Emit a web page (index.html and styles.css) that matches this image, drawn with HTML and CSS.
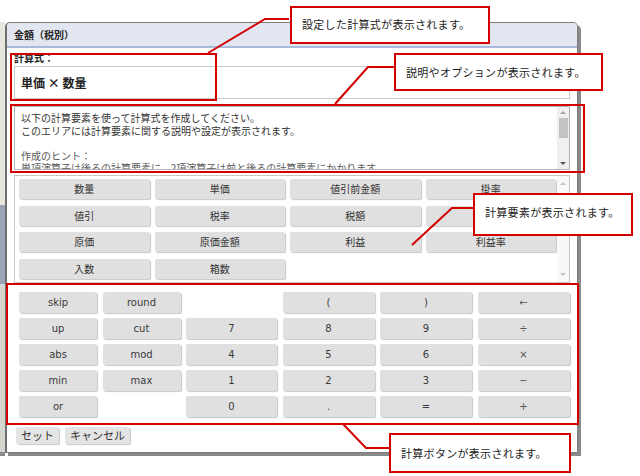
FILE: index.html
```html
<!DOCTYPE html>
<html lang="ja">
<head>
<meta charset="utf-8">
<title>金額（税別）</title>
<link rel="stylesheet" href="styles.css">
</head>
<body>
<div class="page">
  <div class="backdrop"></div>
  <div class="dialog">
    <div class="titlebar">金額（税別）</div>
    <div class="dbody">
      <div class="label">計算式：</div>
      <div class="formula">単価 × 数量</div>
      <div class="desc">
        <div class="desc-text">
          <p>以下の計算要素を使って計算式を作成してください。<br>このエリアには計算要素に関する説明や設定が表示されます。</p>
          <p class="hint">作成のヒント：<br>単項演算子は後ろの計算要素に、2項演算子は前と後ろの計算要素にかかります。</p>
        </div>
        <div class="vscroll">
          <span class="arr up"></span><span class="thumb"></span><span class="fill"></span><span class="arr down"></span>
        </div>
      </div>
      <div class="elems">
        <div class="egrid">
          <button>数量</button><button>単価</button><button>値引前金額</button><button>掛率</button>
          <button>値引</button><button>税率</button><button>税額</button><button>金額</button>
          <button>原価</button><button>原価金額</button><button>利益</button><button>利益率</button>
          <button>入数</button><button>箱数</button>
        </div>
        <div class="vscroll light">
          <span class="arr up"></span><span class="fill"></span><span class="arr down"></span>
        </div>
      </div>
      <div class="calc">
        <button>skip</button><button>round</button><span class="blank"></span><button>(</button><button>)</button><button class="sym">←</button>
        <button>up</button><button>cut</button><button>7</button><button>8</button><button>9</button><button class="sym">÷</button>
        <button>abs</button><button>mod</button><button>4</button><button>5</button><button>6</button><button class="sym">×</button>
        <button>min</button><button>max</button><button>1</button><button>2</button><button>3</button><button class="sym">−</button>
        <button>or</button><span class="blank"></span><button>0</button><button>.</button><button>=</button><button class="sym">+</button>
      </div>
      <div class="actions"><button>セット</button><button>キャンセル</button></div>
    </div>
  </div>
</div>

<div class="rbox rb-formula"></div>
<div class="rbox rb-desc"></div>
<div class="rbox rb-calc"></div>

<svg class="lines" width="640" height="476" viewBox="0 0 640 476">
  <polyline points="289,19 265,19 208,53"/>
  <polyline points="395,67 368,67 335,104"/>
  <polyline points="474,208 452,208 412,245"/>
  <polyline points="390,448 366,448 343,424"/>
</svg>

<div class="callout c1">設定した計算式が表示されます。</div>
<div class="callout c2">説明やオプションが表示されます。</div>
<div class="callout c3">計算要素が表示されます。</div>
<div class="callout c4">計算ボタンが表示されます。</div>
</body>
</html>
```

FILE: styles.css
```css
* { box-sizing: border-box; }
html, body { margin: 0; padding: 0; }
body {
  width: 640px;
  height: 476px;
  position: relative;
  overflow: hidden;
  background: #fff;
  font-family: "Noto Sans CJK JP", "DejaVu Sans", sans-serif;
  color: #333;
}

.page {
  display: flex;
  padding-top: 22px;
}

.backdrop {
  width: 5px;
  height: 434px;
  background: linear-gradient(to bottom, #e6e6de 0 183px, #9ba4b4 183px 262px, #d6d6d0 262px 430px, #8c8c8c 430px);
}

.dialog {
  width: 573px;
  height: 431px;
  border: 1px solid #7d7d7d;
  border-left: 2px solid #6e6e6e;
  border-radius: 5px 5px 0 0;
  box-shadow: 3px 3px 0 #8a8a8a;
  background: #fff;
  display: flex;
  flex-direction: column;
}

.titlebar {
  height: 25px;
  background: #e2e6f0;
  border-bottom: 2px solid #a9bbdb;
  border-radius: 4px 4px 0 0;
  padding-left: 7px;
  font-size: 10px;
  font-weight: bold;
  line-height: 23px;
  color: #222;
}

.dbody {
  padding: 0 7px;
}

.label {
  margin-top: 3px;
  font-size: 10px;
  font-weight: bold;
  line-height: 14px;
  color: #222;
}

.formula {
  margin-top: 1px;
  height: 33px;
  border: 1px solid #c8c8c8;
  padding-left: 6px;
  font-size: 12px;
  font-weight: bold;
  line-height: 31px;
  color: #222;
}

.desc {
  margin-top: 7px;
  height: 64px;
  border: 1px solid #b4b4b4;
  display: flex;
}

.desc-text {
  flex: 1;
  padding: 5px 0 0 6px;
  font-size: 10px;
  line-height: 12.5px;
  overflow: hidden;
  color: #333;
}
.desc-text p { margin: 0; }
.desc-text p + p { margin-top: 12.5px; }
.desc-text .hint { color: #5a5a5a; }

.vscroll {
  width: 12px;
  background: #f0f0f0;
  display: flex;
  flex-direction: column;
  align-items: center;
}
.vscroll .fill { flex: 1; }
.vscroll .arr {
  width: 0;
  height: 0;
  border-left: 3px solid transparent;
  border-right: 3px solid transparent;
}
.vscroll .up { border-bottom: 3px solid #a6a6a6; margin-top: 4px; }
.vscroll .down { border-top: 3px solid #555; margin-bottom: 4px; }
.vscroll .thumb {
  width: 9px;
  height: 20px;
  margin-top: 4px;
  background: #c3c3c3;
}
.vscroll.light { background: #f8f8f8; margin-left: auto; }
.vscroll.light .up { border-bottom-color: #c4c4c4; margin-top: 6px; }
.vscroll.light .down { border-top-color: #c4c4c4; margin-bottom: 6px; }

button {
  font-family: inherit;
  border: none;
  background: #e0e0e0;
  border-radius: 2px;
  box-shadow: 1px 1px 1px rgba(0, 0, 0, 0.22);
  color: #333;
  font-size: 10px;
  padding: 0;
  line-height: 1;
}

.elems {
  margin-top: 5px;
  height: 108px;
  border: 1px solid #c8c8c8;
  display: flex;
}
.egrid {
  margin: 3px 0 0 4px;
  width: 537px;
  display: grid;
  grid-template-columns: repeat(4, 1fr);
  grid-auto-rows: 20px;
  column-gap: 5px;
  row-gap: 6.5px;
  align-content: start;
}

.calc {
  padding: 9px 0 0 5px;
  display: grid;
  grid-template-columns: 78px 78px 91px 92px 92px 92px;
  grid-auto-rows: 21px;
  column-gap: 5.5px;
  row-gap: 5px;
}
.calc button {
  font-family: "DejaVu Sans", "Noto Sans CJK JP", sans-serif;
  font-size: 10px;
  color: #3a3a3a;
}
.calc .sym { color: #555; }

.actions {
  margin-top: 10px;
  padding-left: 2px;
  display: flex;
  gap: 6px;
}
.actions button {
  height: 17px;
  padding: 0 5px;
  font-size: 11px;
  background: #e4e4e4;
}

/* annotations */
.rbox {
  position: absolute;
  border: 2px solid #d20000;
}
.rb-formula { left: 10px; top: 53px; width: 207px; height: 48px; }
.rb-desc { left: 10px; top: 104px; width: 575px; height: 69px; }
.rb-calc { left: 6px; top: 283px; width: 573px; height: 142px; }

.lines {
  position: absolute;
  left: 0;
  top: 0;
}
.lines polyline {
  fill: none;
  stroke: #d20000;
  stroke-width: 2;
}

.callout {
  position: absolute;
  border: 2px solid #d20000;
  background: #fff;
  font-size: 11px;
  letter-spacing: 0.3px;
  color: #222;
  padding-left: 10px;
  display: flex;
  align-items: center;
}
.c1 { left: 290px; top: 6px; width: 200px; height: 38px; padding-bottom: 2px; }
.c2 { left: 394px; top: 53px; width: 209px; height: 38px; }
.c3 { left: 473px; top: 193px; width: 160px; height: 43px; align-items: flex-start; padding-top: 9px; }
.c4 { left: 389px; top: 433px; width: 182px; height: 40px; }
```
